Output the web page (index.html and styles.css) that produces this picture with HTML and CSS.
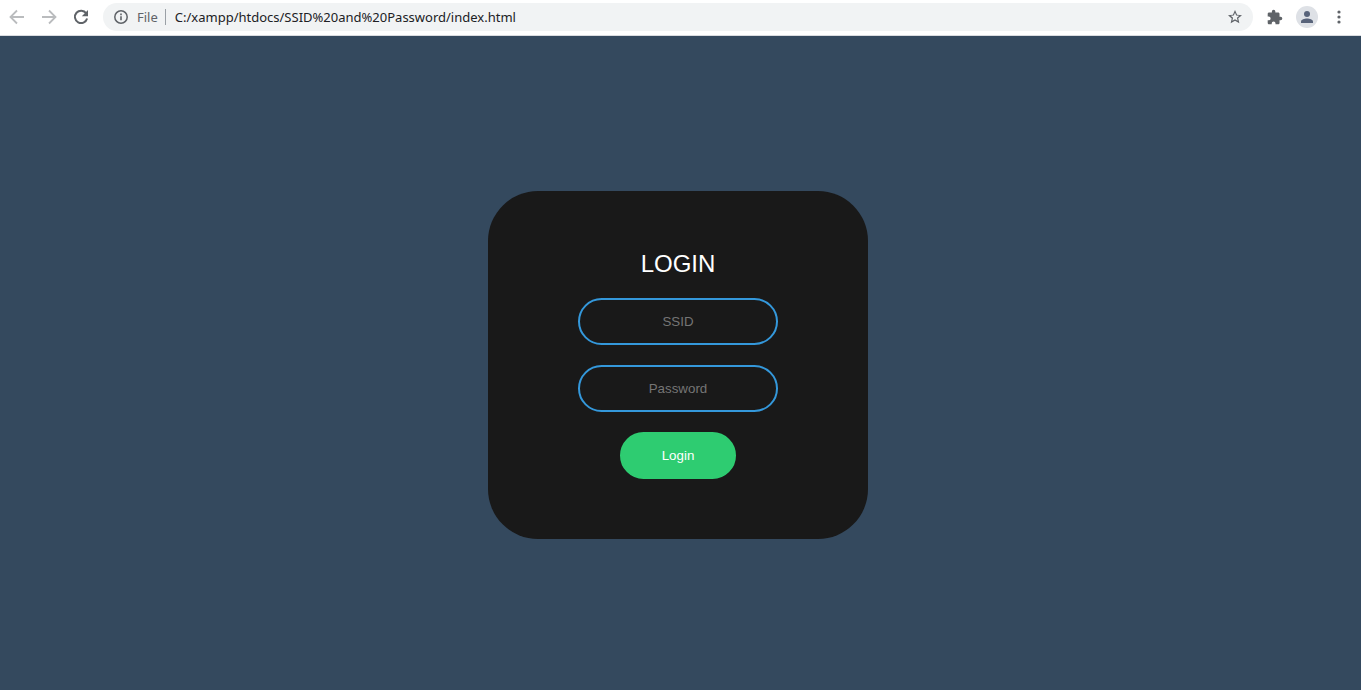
FILE: index.html
```html
<!DOCTYPE html>
<html lang="en">
<head>
<meta charset="utf-8">
<meta name="viewport" content="width=device-width, initial-scale=1">
<title>Login</title>
<link rel="stylesheet" href="styles.css">
</head>
<body>
<header class="toolbar">
  <nav class="nav" aria-label="History">
    <button class="icon-button faded" type="button" aria-label="Back"><svg class="icon" viewBox="0 0 16 16"><path d="M15 8H2M8 1.5 1.5 8 8 14.5" fill="none" stroke="currentColor" stroke-width="1.8"/></svg></button>
    <button class="icon-button faded" type="button" aria-label="Forward"><svg class="icon" viewBox="0 0 16 16"><path d="M1 8h13M8 1.5 14.5 8 8 14.5" fill="none" stroke="currentColor" stroke-width="1.8"/></svg></button>
    <button class="icon-button" type="button" aria-label="Reload"><svg class="icon" viewBox="0 0 16 16"><path d="M13.2 4.3A6.2 6.2 0 1 0 14.1 9.5" fill="none" stroke="currentColor" stroke-width="2"/><path d="M15 1v6.2H8.8z" fill="currentColor"/></svg></button>
  </nav>
  <div class="address">
    <svg class="icon info" viewBox="0 0 16 16"><circle cx="8" cy="8" r="6.2" fill="none" stroke="currentColor" stroke-width="1.5"/><path d="M7.2 7.2h1.6v4.1H7.2zM7.2 4.6h1.6v1.6H7.2z" fill="currentColor"/></svg>
    <span class="scheme">File</span>
    <input class="url" type="text" aria-label="Address" value="C:/xampp/htdocs/SSID%20and%20Password/index.html">
    <button class="icon-button" type="button" aria-label="Bookmark"><svg class="icon" viewBox="0 0 24 24"><path fill="currentColor" d="m22.500 9.200-7.400-.650L12 1.600 8.900 8.560l-7.400.630 5.600 4.900L5.450 21.400 12 17.500l6.550 3.900-1.700-7.350zM12 15.400l-3.950 2.400 1.050-4.500-3.500-3.050 4.600-.4L12 5.600l1.800 4.250 4.600.4-3.500 3.050 1.050 4.500z"/></svg></button>
  </div>
  <div class="actions">
    <button class="icon-button" type="button" aria-label="Extensions"><svg class="icon" viewBox="1 0 23 23"><path fill="currentColor" d="M20.5 11H19V7c0-1.1-.9-2-2-2h-4V3.500a2.500 2.500 0 0 0-5 0V5H4c-1.100 0-1.990.9-1.990 2v3.800H3.500a2.700 2.700 0 0 1 0 5.400H2V20c0 1.100.9 2 2 2h3.800v-1.500a2.700 2.700 0 0 1 5.400 0V22H17c1.100 0 2-.9 2-2v-4h1.500a2.500 2.500 0 0 0 0-5z"/></svg></button>
    <button class="avatar" type="button" aria-label="Profile"><svg class="icon" viewBox="0 0 16 16"><circle cx="8" cy="5" r="3" fill="currentColor"/><path d="M2 14v-1.500C2 10.500 5.500 9.500 8 9.500s6 1 6 3V14z" fill="currentColor"/></svg></button>
    <button class="icon-button" type="button" aria-label="Menu"><svg class="icon" viewBox="0 0 16 16" fill="currentColor"><circle cx="8" cy="3" r="1.600"/><circle cx="8" cy="8" r="1.600"/><circle cx="8" cy="13" r="1.600"/></svg></button>
  </div>
</header>
<main class="page">
  <form class="login">
    <h1 class="title">LOGIN</h1>
    <input class="field" type="text" placeholder="SSID" aria-label="SSID">
    <input class="field" type="password" placeholder="Password" aria-label="Password">
    <button class="submit" type="submit">Login</button>
  </form>
</main>
</body>
</html>
```
FILE: styles.css
```css
* {
  box-sizing: border-box;
}

body {
  margin: 0;
  min-height: 100vh;
  display: flex;
  flex-direction: column;
  background: #34495e;
  font-family: "Liberation Sans", Arial, sans-serif;
}

button,
input {
  font-family: inherit;
}

.toolbar {
  display: flex;
  align-items: center;
  padding: 3px 13px 4px 8px;
  background: #fff;
  border-bottom: 1px solid #dadce0;
  color: #5f6368;
  font-family: "Noto Sans", "Open Sans", sans-serif;
  font-size: 13px;
}

.nav {
  display: flex;
  gap: 14px;
  margin-right: 13px;
}

.icon {
  display: block;
  width: 16px;
  height: 16px;
}

.icon-button {
  padding: 1px;
  border: 0;
  background: none;
  color: #5f6368;
}

.faded {
  color: #babcbe;
}

.address {
  flex: 1;
  display: flex;
  align-items: center;
  height: 28px;
  padding: 0 9px 0 10px;
  border-radius: 14px;
  background: #f1f3f4;
}

.scheme {
  margin: 0 9px 0 8px;
  padding-right: 7px;
  border-right: 1px solid #9aa0a6;
  line-height: 16px;
}

.url {
  flex: 1;
  min-width: 0;
  padding: 0;
  border: 0;
  background: none;
  color: #202124;
  font-size: 13px;
}

.actions {
  display: flex;
  align-items: center;
  gap: 12px;
  margin-left: 13px;
}

.avatar {
  padding: 3px;
  border: 0;
  border-radius: 50%;
  background: #dee1e6;
  color: #58637a;
}

.page {
  flex: 1;
  display: flex;
  align-items: center;
  justify-content: center;
  padding: 3px 5px 0 0;
}

.login {
  display: flex;
  flex-direction: column;
  align-items: center;
  gap: 20px;
  width: 380px;
  max-width: 100%;
  padding: 60px 40px;
  border-radius: 50px;
  background: #191919;
}

.title {
  margin: 0;
  padding-bottom: 2px;
  color: #fff;
  font-size: 24px;
  font-weight: 400;
  line-height: 25px;
}

.field {
  width: 200px;
  padding: 14px 10px;
  border: 2px solid #3498db;
  border-radius: 24px;
  background: none;
  color: #fff;
  line-height: 15px;
  text-align: center;
}

.field::placeholder {
  color: #757575;
}

.submit {
  padding: 14px 40px;
  border: 2px solid #2ecc71;
  border-radius: 24px;
  background: #2ecc71;
  color: #fff;
  line-height: 15px;
}
```
